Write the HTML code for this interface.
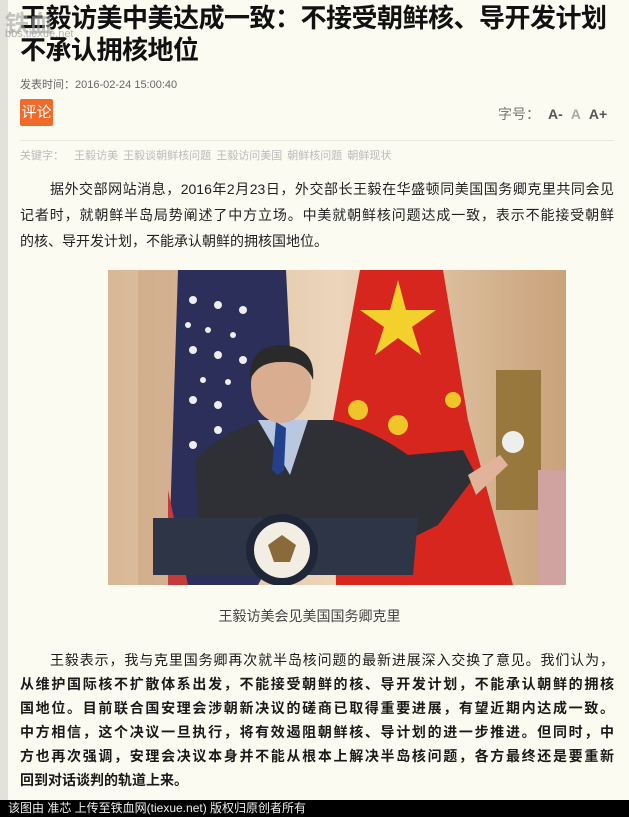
<!DOCTYPE html>
<html><head><meta charset="utf-8"><style>
*{margin:0;padding:0}
body{width:629px;height:817px;overflow:hidden;background:#fbfbf2;font-family:"Liberation Sans","Noto Sans CJK SC",sans-serif;position:relative;color:#222}
.strip{position:absolute;left:0;top:0;width:8px;height:800px;background:#e2e2da}
h1{position:absolute;left:20px;top:2px;width:600px;font-size:26px;line-height:32px;font-weight:bold;color:#111;letter-spacing:-0.5px}
.time{position:absolute;left:20px;top:76px;font-size:11px;color:#666}
.btn{position:absolute;left:20px;top:99px;width:33px;height:27px;background:#f06a2a;color:#fff;font-size:15px;line-height:27px;text-align:center;border-radius:2px}
.fs{position:absolute;left:498px;top:104px;font-size:14px;color:#777}
.fs b{color:#555;margin-left:8px}
.hr{position:absolute;left:20px;top:140px;width:594px;border-top:1px solid #e8e8e0}
.kw{position:absolute;left:20px;top:147px;font-size:11px;color:#bbb;word-spacing:2px}
.p{position:absolute;left:20px;width:594px;font-size:14px}
.p div{white-space:nowrap;text-align:justify;text-align-last:justify}
.p div.l{text-align-last:left}
.p div.i{padding-left:30px}
.p1{top:176px;line-height:26px;color:#222}
.p2{top:648px;line-height:24px;font-weight:bold;color:#1a1a1a}
.cap{position:absolute;left:0;width:629px;top:606px;text-align:center;font-size:14px;color:#444;margin-left:-5px}
.foot{position:absolute;left:0;top:800px;width:629px;height:17px;background:#000;color:#eee;font-size:12px;line-height:17px;padding-left:8px}
.wm{position:absolute;left:5px;top:4px;font-size:24px;color:rgba(160,160,160,.6);font-weight:bold}
.wm2{position:absolute;left:5px;top:28px;font-size:11px;color:rgba(150,150,150,.7)}
</style></head><body>
<div class="strip"></div>
<h1>王毅访美中美达成一致：不接受朝鲜核、导开发计划<br>不承认拥核地位</h1>
<div class="wm">铁血</div><div class="wm2">bbs.tiexue.net</div>
<div class="time">发表时间：2016-02-24 15:00:40</div>
<div class="btn">评论</div>
<div class="fs">字号：<b>A-</b><b style="color:#aaa">A</b><b>A+</b></div>
<div class="hr"></div>
<div class="kw">关键字：&nbsp; 王毅访美 王毅谈朝鲜核问题 王毅访问美国 朝鲜核问题 朝鲜现状</div>
<div class="p p1">
<div class="i">据外交部网站消息，2016年2月23日，外交部长王毅在华盛顿同美国国务卿克里共同会见</div>
<div>记者时，就朝鲜半岛局势阐述了中方立场。中美就朝鲜核问题达成一致，表示不能接受朝鲜</div>
<div class="l">的核、导开发计划，不能承认朝鲜的拥核国地位。</div>
</div>
<svg style="position:absolute;left:108px;top:270px" width="458" height="315" viewBox="0 0 458 315">
<defs><linearGradient id="bg" x1="0" x2="1"><stop offset="0" stop-color="#d8b796"/><stop offset=".5" stop-color="#ecd5bb"/><stop offset="1" stop-color="#c9a27a"/></linearGradient></defs>
<rect width="458" height="315" fill="url(#bg)"/>
<rect x="30" y="0" width="40" height="315" fill="#c9a27f" opacity=".5"/>
<path d="M70 0 L178 0 L190 240 L150 315 L60 315 Z" fill="#2b2f5a"/>
<path d="M60 220 L80 315 L60 315Z" fill="#c43b3b"/>
<g fill="#eee"><circle cx="85" cy="30" r="4"/><circle cx="110" cy="35" r="4"/><circle cx="135" cy="40" r="4"/><circle cx="85" cy="80" r="4"/><circle cx="110" cy="85" r="4"/><circle cx="135" cy="90" r="4"/><circle cx="85" cy="130" r="4"/><circle cx="110" cy="135" r="4"/><circle cx="85" cy="175" r="4"/><circle cx="110" cy="160" r="4"/><circle cx="80" cy="55" r="3"/><circle cx="100" cy="60" r="3"/><circle cx="125" cy="65" r="3"/><circle cx="95" cy="110" r="3"/><circle cx="120" cy="112" r="3"/></g>
<path d="M252 0 L335 0 L360 150 L405 315 L228 315 L225 150 Z" fill="#d6261e"/>
<polygon points="290,10 298,40 328,40 304,57 313,85 290,68 267,85 276,57 252,40 282,40" fill="#f4d02c"/>
<g fill="#f0c52a"><circle cx="250" cy="140" r="10"/><circle cx="290" cy="155" r="10"/><circle cx="345" cy="130" r="8"/></g>
<rect x="388" y="100" width="45" height="140" fill="#8a6a2a" opacity=".8"/>
<circle cx="405" cy="172" r="11" fill="#eee"/>
<rect x="430" y="200" width="28" height="115" fill="#d0a3a0"/>
<path d="M88 190 Q120 155 165 150 L225 150 Q265 160 300 185 L355 180 L368 205 L330 255 L300 270 L90 270 Z" fill="#2e3035"/>
<path d="M150 150 L182 205 L200 150 Z" fill="#b9c8e0"/>
<path d="M168 152 L178 158 L176 200 L170 205 L164 200 Z" fill="#23418a"/>
<ellipse cx="173" cy="115" rx="30" ry="38" fill="#d9ad90"/>
<path d="M142 110 Q140 75 175 75 Q208 78 205 110 Q198 90 172 92 Q150 92 142 110Z" fill="#2a2a2a"/>
<path d="M360 205 L392 185 L400 195 L368 225 Z" fill="#e0b39a"/>
<path d="M45 248 L310 248 L305 305 L45 305 Z" fill="#2e3546"/>
<circle cx="174" cy="280" r="36" fill="#1f2638"/>
<circle cx="174" cy="280" r="28" fill="#f2eee3"/>
<path d="M160 275 L174 265 L188 275 L182 292 L166 292 Z" fill="#8a6a3a"/>
</svg>
<div class="cap">王毅访美会见美国国务卿克里</div>
<div class="p p2">
<div class="i" style="font-weight:normal">王毅表示，我与克里国务卿再次就半岛核问题的最新进展深入交换了意见。我们认为，</div>
<div>从维护国际核不扩散体系出发，不能接受朝鲜的核、导开发计划，不能承认朝鲜的拥核</div>
<div>国地位。目前联合国安理会涉朝新决议的磋商已取得重要进展，有望近期内达成一致。</div>
<div>中方相信，这个决议一旦执行，将有效遏阻朝鲜核、导计划的进一步推进。但同时，中</div>
<div>方也再次强调，安理会决议本身并不能从根本上解决半岛核问题，各方最终还是要重新</div>
<div class="l">回到对话谈判的轨道上来。</div>
</div>
<div class="foot">该图由 准芯 上传至铁血网(tiexue.net) 版权归原创者所有</div>
</body></html>
